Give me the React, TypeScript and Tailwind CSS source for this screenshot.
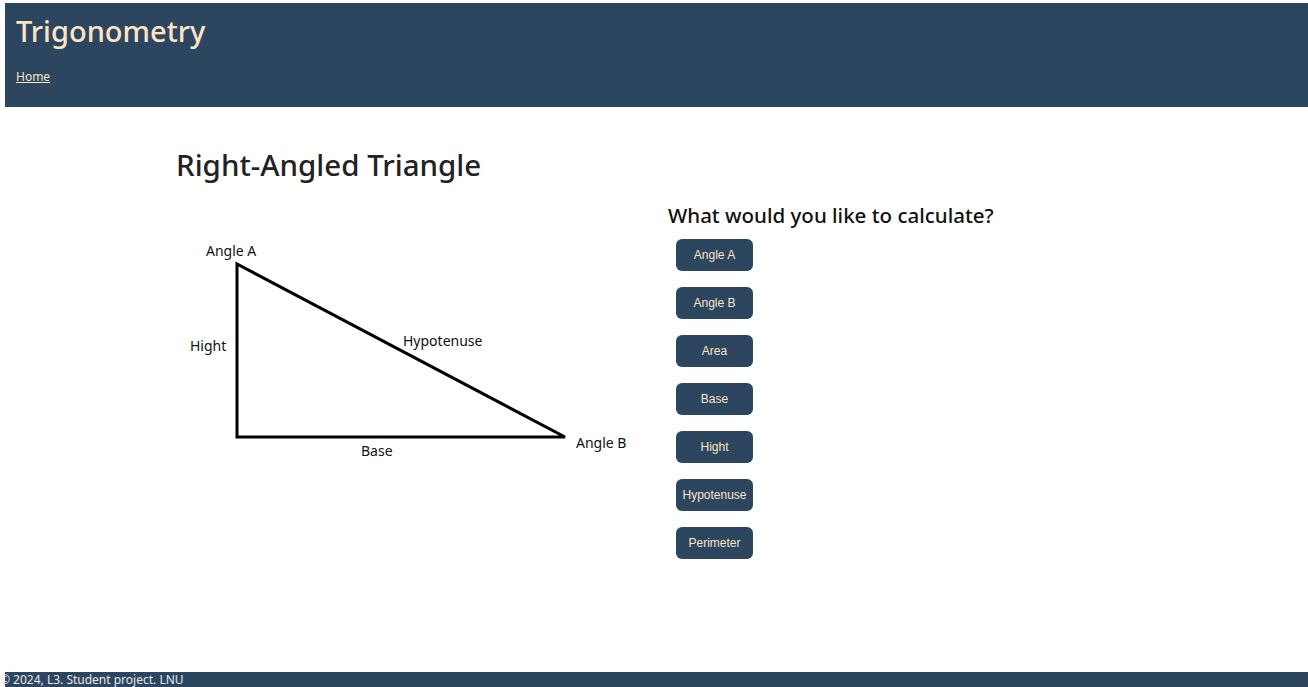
import React from "react";

const options = ["Angle A", "Angle B", "Area", "Base", "Hight", "Hypotenuse", "Perimeter"];

function TriangleFigure() {
  return (
    <svg width="470" height="240" viewBox="0 0 470 240" className="block">
      <polygon points="61,28 61,201 389,201" fill="none" stroke="#000" strokeWidth="3" strokeLinejoin="miter" />
      <g fontFamily="'Noto Sans', 'Open Sans', sans-serif" fontSize="14" fill="#111">
        <text x="30" y="20">Angle A</text>
        <text x="14" y="115">Hight</text>
        <text x="227" y="110">Hypotenuse</text>
        <text x="400" y="212">Angle B</text>
        <text x="185" y="220">Base</text>
      </g>
    </svg>
  );
}

export default function App() {
  return (
    <div
      className="min-h-[687px] flex flex-col bg-white pt-[3px] pl-[5px] overflow-hidden"
      style={{ fontFamily: "'Noto Sans', 'Open Sans', sans-serif" }}
    >
      <header className="h-[104px] bg-[#2c4660] px-[11px] pt-[10px]">
        <h1 className="text-[29px] leading-[36px] font-medium text-[#fde4c4]">Trigonometry</h1>
        <nav className="mt-[14px]">
          <a href="#" className="text-[12px] text-[#fde4c4] underline">
            Home
          </a>
        </nav>
      </header>

      <main className="flex-1 flex pl-[171px]">
        <section className="w-[492px]">
          <h2 className="mt-[40px] text-[29.5px] leading-[36px] font-medium text-[#222]">Right-Angled Triangle</h2>
          <div className="mt-[53px]">
            <TriangleFigure />
          </div>
        </section>
        <section className="pt-[95px]">
          <h3 className="text-[20.5px] leading-[26px] font-medium text-[#111]">What would you like to calculate?</h3>
          <div className="mt-[11px] ml-[8px] flex flex-col gap-[16px]">
            {options.map((o) => (
              <button
                key={o}
                className="w-[77px] h-[32px] rounded-[6px] bg-[#2c4660] text-[12px] text-[#fde4c4] flex items-center justify-center whitespace-nowrap"
                style={{ fontFamily: "'Liberation Sans', Arial, sans-serif" }}
              >
                {o}
              </button>
            ))}
          </div>
        </section>
      </main>

      <footer className="h-[15px] bg-[#2c4660] text-[12px] leading-[15px] text-[#e8e8e8] whitespace-nowrap">
        <span className="relative -left-[5px]">© 2024, L3. Student project. LNU</span>
      </footer>
    </div>
  );
}
